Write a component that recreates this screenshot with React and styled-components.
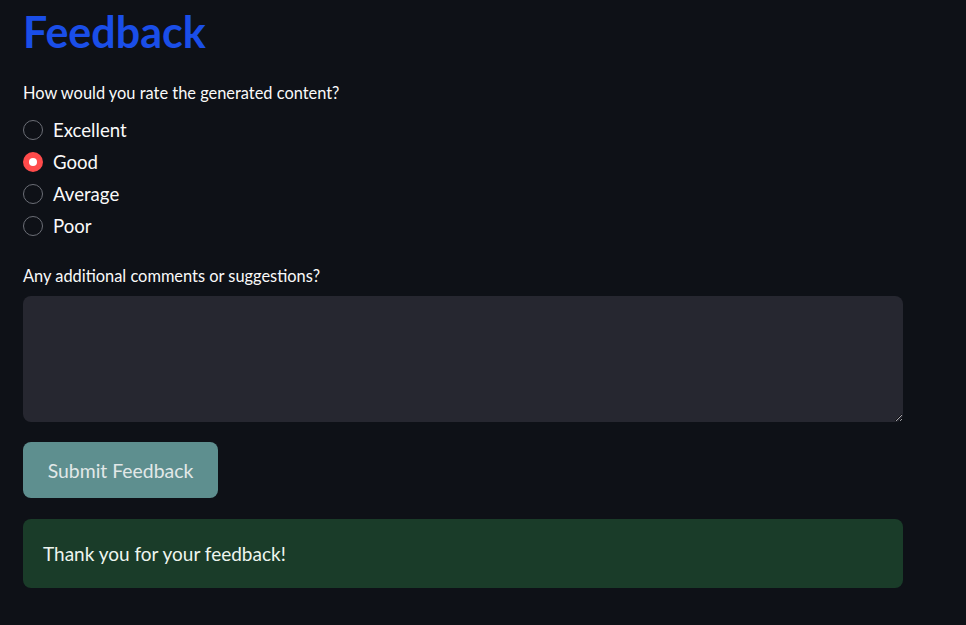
import React, { useState } from "react";
import styled, { createGlobalStyle } from "styled-components";

const Global = createGlobalStyle`
  html, body { margin: 0; padding: 0; background: #0e1117; }
  body { font-family: Lato, "Noto Sans", sans-serif; color: #fafafa; }
  * { box-sizing: border-box; }
`;

const Page = styled.div`
  width: 966px;
  height: 625px;
  overflow: hidden;
  background: #0e1117;
  padding: 0 63px 0 23px;
  display: flex;
  flex-direction: column;
`;

const Title = styled.h1`
  margin: 0;
  padding-top: 6px;
  height: 83px;
  font-size: 43px;
  line-height: 52px;
  font-weight: 700;
  color: #1a4ee8;
`;

const Label = styled.div`
  font-size: 16.4px;
  line-height: 20px;
  height: 24px;
  color: #fafafa;
`;

const RadioGroup = styled.div`
  display: flex;
  flex-direction: column;
  margin-top: 7px;
`;

const Option = styled.label`
  display: flex;
  align-items: center;
  height: 32px;
  gap: 10px;
  font-size: 18.6px;
  cursor: pointer;
`;

const Circle = styled.span`
  width: 20px;
  height: 20px;
  border-radius: 50%;
  flex: none;
  display: flex;
  align-items: center;
  justify-content: center;
  background: ${(p) => (p.$on ? "#ff4b4b" : "transparent")};
  border: ${(p) => (p.$on ? "none" : "1px solid #6b6e76")};
  &::after {
    content: "";
    display: ${(p) => (p.$on ? "block" : "none")};
    width: 8px;
    height: 8px;
    border-radius: 50%;
    background: #fff;
  }
`;

const Section = styled.div`
  margin-top: ${(p) => p.$mt || 0}px;
`;

const TextArea = styled.textarea`
  display: block;
  width: 880px;
  height: 126px;
  margin-top: 6px;
  background: #262730;
  border: none;
  border-radius: 8px;
  color: #fafafa;
  font-family: inherit;
  font-size: 16px;
  padding: 14px 16px;
  resize: vertical;
  outline: none;
`;

const Button = styled.button`
  margin-top: 20px;
  width: 195px;
  height: 56px;
  border: none;
  border-radius: 8px;
  background: #5e8f8f;
  color: #e2e8e8;
  font-family: inherit;
  font-size: 19.4px;
  cursor: pointer;
  align-self: flex-start;
`;

const Success = styled.div`
  margin-top: 21px;
  width: 880px;
  height: 69px;
  border-radius: 8px;
  background: #1a3c29;
  color: #eef5ef;
  font-size: 19px;
  display: flex;
  align-items: center;
  padding: 0 20px;
`;

const options = ["Excellent", "Good", "Average", "Poor"];

export default function App() {
  const [val, setVal] = useState("Good");
  return (
    <>
      <Global />
      <Page>
        <Title>Feedback</Title>
        <Label>How would you rate the generated content?</Label>
        <RadioGroup>
          {options.map((o) => (
            <Option key={o} onClick={() => setVal(o)}>
              <Circle $on={val === o} />
              {o}
            </Option>
          ))}
        </RadioGroup>
        <Section $mt={24}>
          <Label>Any additional comments or suggestions?</Label>
          <TextArea />
        </Section>
        <Button>Submit Feedback</Button>
        <Success>Thank you for your feedback!</Success>
      </Page>
    </>
  );
}
